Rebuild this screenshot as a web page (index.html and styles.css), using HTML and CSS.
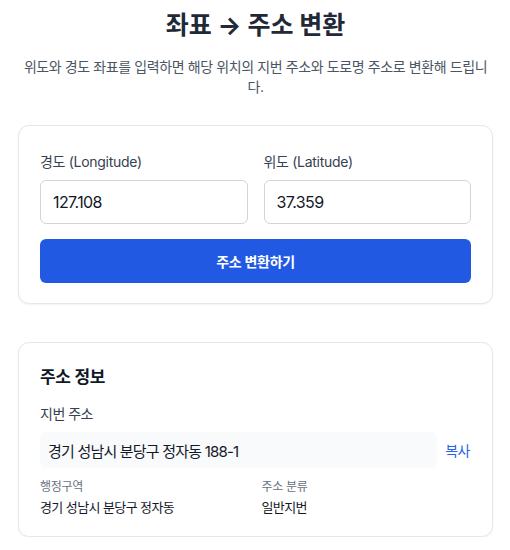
FILE: index.html
```html
<!DOCTYPE html>
<html lang="ko">
<head>
<meta charset="utf-8">
<title>좌표 → 주소 변환</title>
<link rel="stylesheet" href="styles.css">
</head>
<body>
<main class="page">
  <h1 class="title">좌표 → 주소 변환</h1>
  <p class="subtitle">위도와 경도 좌표를 입력하면 해당 위치의 지번 주소와 도로명 주소로 변환해 드립니다.</p>

  <section class="card form-card">
    <div class="fields">
      <label class="field">
        <span class="field-label">경도 (Longitude)</span>
        <input class="field-input" type="text" value="127.108">
      </label>
      <label class="field">
        <span class="field-label">위도 (Latitude)</span>
        <input class="field-input" type="text" value="37.359">
      </label>
    </div>
    <button class="submit" type="button">주소 변환하기</button>
  </section>

  <section class="card result-card">
    <h2 class="result-title">주소 정보</h2>
    <div class="addr-label">지번 주소</div>
    <div class="addr-row">
      <div class="addr-box">경기 성남시 분당구 정자동 188-1</div>
      <button class="copy" type="button">복사</button>
    </div>
    <div class="meta">
      <div class="meta-item">
        <div class="meta-label">행정구역</div>
        <div class="meta-value">경기 성남시 분당구 정자동</div>
      </div>
      <div class="meta-item">
        <div class="meta-label">주소 분류</div>
        <div class="meta-value">일반지번</div>
      </div>
    </div>
  </section>
</main>
</body>
</html>
```

FILE: styles.css
```css
* { box-sizing: border-box; }

html, body {
  margin: 0;
  padding: 0;
  background: #ffffff;
}

body {
  font-family: "Inter", "Noto Sans CJK KR", sans-serif;
  color: #111827;
}

.page {
  padding: 9px 17px 0 18px;
}

.title {
  margin: 0;
  text-align: center;
  font-size: 25px;
  line-height: 32px;
  font-weight: 700;
  color: #1f2937;
}

.subtitle {
  margin: 16px 0 0;
  text-align: center;
  font-size: 14px;
  line-height: 20px;
  letter-spacing: -0.4px;
  color: #4b5563;
}

.card {
  background: #fff;
  border: 1px solid #e5e7eb;
  border-radius: 11px;
  box-shadow: 0 1px 2px rgba(0, 0, 0, 0.05);
}

.form-card {
  margin-top: 28px;
  padding: 26px 21px 20px;
}

.fields {
  display: grid;
  grid-template-columns: 1fr 1fr;
  gap: 16px;
}

.field {
  display: flex;
  flex-direction: column;
  gap: 8px;
}

.field-label {
  font-size: 14px;
  line-height: 20px;
  letter-spacing: -0.3px;
  color: #374151;
}

.field-input {
  height: 44px;
  width: 100%;
  border: 1px solid #d1d5db;
  border-radius: 6px;
  padding: 0 12px;
  font-family: "Inter", "Noto Sans CJK KR", sans-serif;
  font-size: 16px;
  letter-spacing: -0.6px;
  color: #111827;
  background: #fff;
  outline: none;
}

.submit {
  margin-top: 15px;
  width: 100%;
  height: 44px;
  border: none;
  border-radius: 6px;
  background: #2259e3;
  color: #fff;
  font-family: "Inter", "Noto Sans CJK KR", sans-serif;
  font-size: 14px;
  font-weight: 600;
  letter-spacing: -0.3px;
}

.result-card {
  margin-top: 38px;
  padding: 20px 21px 19px;
}

.result-title {
  margin: 0;
  font-size: 17px;
  line-height: 28px;
  font-weight: 700;
  letter-spacing: -0.3px;
  color: #111827;
}

.addr-label {
  margin-top: 13px;
  font-size: 14px;
  line-height: 20px;
  letter-spacing: -0.5px;
  color: #374151;
}

.addr-row {
  margin-top: 8px;
  display: flex;
  align-items: center;
  gap: 8px;
}

.addr-box {
  flex: 1;
  height: 36px;
  display: flex;
  align-items: center;
  padding: 0 8px;
  background: #f9fafb;
  border-radius: 6px;
  font-size: 15px;
  letter-spacing: -0.8px;
  color: #111827;
}

.copy {
  border: none;
  background: none;
  padding: 0 1px 0 0;
  font-family: "Inter", "Noto Sans CJK KR", sans-serif;
  font-size: 14px;
  letter-spacing: -0.5px;
  color: #2563eb;
}

.meta {
  margin-top: 11px;
  display: grid;
  grid-template-columns: 1fr 1fr;
  gap: 12px;
}

.meta-label {
  font-size: 12px;
  line-height: 16px;
  letter-spacing: -0.3px;
  color: #6b7280;
}

.meta-value {
  margin-top: 2px;
  font-size: 13px;
  line-height: 20px;
  letter-spacing: -0.6px;
  color: #111827;
}
```
